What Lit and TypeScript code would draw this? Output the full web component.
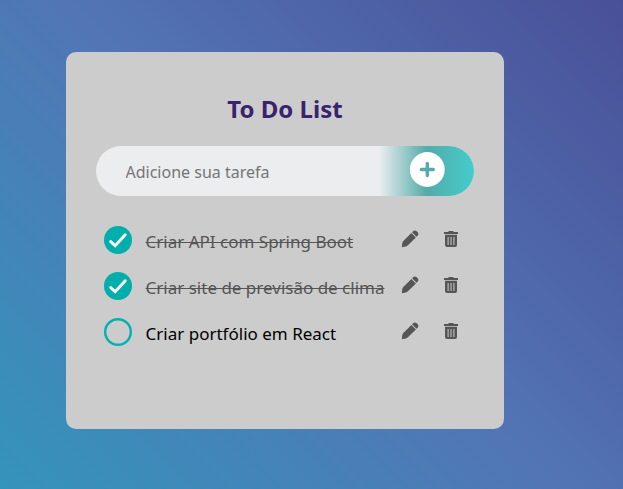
import { LitElement, html, css } from "lit";
import { customElement, property, state } from "lit/decorators.js";
import { classMap } from "lit/directives/class-map.js";

interface Task {
  text: string;
  done: boolean;
}

@customElement("todo-item")
class TodoItem extends LitElement {
  @property() text = "";
  @property({ type: Boolean }) done = false;

  static styles = css`
    :host {
      display: flex;
      align-items: flex-start;
      height: 46px;
      padding: 0 14px 0 8px;
      box-sizing: border-box;
    }
    svg { display: block; }
    .check {
      flex: none;
      width: 28px;
      height: 28px;
      border-radius: 50%;
      box-sizing: border-box;
      cursor: pointer;
      color: #00afab;
    }
    .label {
      flex: 1;
      margin: 4px 0 0 13.6px;
      font-size: 17px;
      line-height: 24px;
      white-space: nowrap;
      color: #000;
    }
    .label.done {
      color: #555;
      text-decoration: underline 1px;
      text-underline-offset: -6px;
      text-decoration-skip-ink: none;
    }
    .actions {
      display: flex;
      gap: 23px;
      margin-top: 4px;
      color: #555;
    }
  `;

  render() {
    return html`
      <div class="check" @click=${() => this.dispatchEvent(new Event("toggle"))}>
        ${this.done
          ? html`<svg width="28" height="28" viewBox="0 0 28 28"><circle cx="14" cy="14" r="14" fill="currentColor"/><path d="M6.7 15.6 L11.2 19.8 L21.2 8.8" fill="none" stroke="#fff" stroke-width="2.9" stroke-linecap="round"/></svg>`
          : html`<svg width="28" height="28" viewBox="0 0 28 28"><circle cx="14" cy="14" r="12.8" fill="none" stroke="#00b3af" stroke-width="2.4"/></svg>`}
      </div>
      <div class=${classMap({ label: true, done: this.done })}>${this.text}</div>
      <div class="actions">
        <svg width="18" height="18" viewBox="0 0 18 18" fill="currentColor"><path d="M10.4 2.9 L14.9 7.4 L6.9 15.3 Q6 16.1 4.8 16.4 L.8 17.2 L1.3 13.2 Q1.5 11.9 2.3 11 Z"/><path d="M11.1 2.3 L12.4 1 Q14 -.2 15.6 1.2 L16.7 2.2 Q18 3.8 16.8 5.5 L15.5 6.7 Z"/></svg>
        <svg width="18" height="18" viewBox="0 0 18 18" fill="currentColor"><path d="M6 1.9 L7 .9 H11 L12 1.9 H16 V4 H2 V1.9 Z"/><path fill-rule="evenodd" d="M3 4.8 H15 V15 Q15 17 13 17 H5 Q3 17 3 15 Z M5.6 7 V15 H6.6 V7 Z M8.5 7 V15 H9.5 V7 Z M11.4 7 V15 H12.4 V7 Z"/></svg>
      </div>
    `;
  }
}

@customElement("app-root")
class AppRoot extends LitElement {
  @state() private tasks: Task[] = [
    { text: "Criar API com Spring Boot", done: true },
    { text: "Criar site de previsão de clima", done: true },
    { text: "Criar portfólio em React", done: false },
  ];

  static styles = css`
    :host {
      display: block;
      height: 100vh;
      box-sizing: border-box;
      padding: 52px 0 0 66px;
      overflow: hidden;
      font-family: "Noto Sans", sans-serif;
      background: linear-gradient(45deg, #3494bb, #5275b5 50%, #495098);
    }
    .card {
      width: 438px;
      height: 377px;
      box-sizing: border-box;
      padding: 40px 30px 0;
      border-radius: 10px;
      background: #ccc;
    }
    h1 {
      margin: 0 0 20px;
      font-size: 24px;
      line-height: 34px;
      font-weight: 700;
      text-align: center;
      color: #3a236e;
    }
    .entry {
      display: flex;
      height: 50px;
      border-radius: 25px;
      overflow: hidden;
      background: #ecedef;
    }
    input {
      flex: 1;
      min-width: 0;
      border: 0;
      outline: 0;
      padding: 2px 0 0 29.5px;
      background: none;
      font: 16px "Noto Sans", sans-serif;
    }
    input::placeholder { color: #757575; }
    .add {
      flex: none;
      width: 95px;
      border: 0;
      padding: 6px 0 0 31px;
      display: flex;
      align-items: flex-start;
      background: linear-gradient(90deg, #ecedef, #54abaa 50%, #44cccc);
    }
    .list { margin-top: 30px; }
  `;

  private toggle(i: number) {
    this.tasks = this.tasks.map((t, n) => (n === i ? { ...t, done: !t.done } : t));
  }

  render() {
    return html`
      <div class="card">
        <h1>To Do List</h1>
        <div class="entry">
          <input placeholder="Adicione sua tarefa" />
          <button class="add">
            <svg width="35" height="35" viewBox="0 0 35 35"><circle cx="17.3" cy="17.5" r="17.4" fill="#fff"/><path d="M17.3 11.5 V23.5 M11.3 17.5 H23.3" stroke="#54abaa" stroke-width="3.4" stroke-linecap="round"/></svg>
          </button>
        </div>
        <div class="list">
          ${this.tasks.map((t, i) => html`<todo-item .text=${t.text} .done=${t.done} @toggle=${() => this.toggle(i)}></todo-item>`)}
        </div>
      </div>
    `;
  }
}
